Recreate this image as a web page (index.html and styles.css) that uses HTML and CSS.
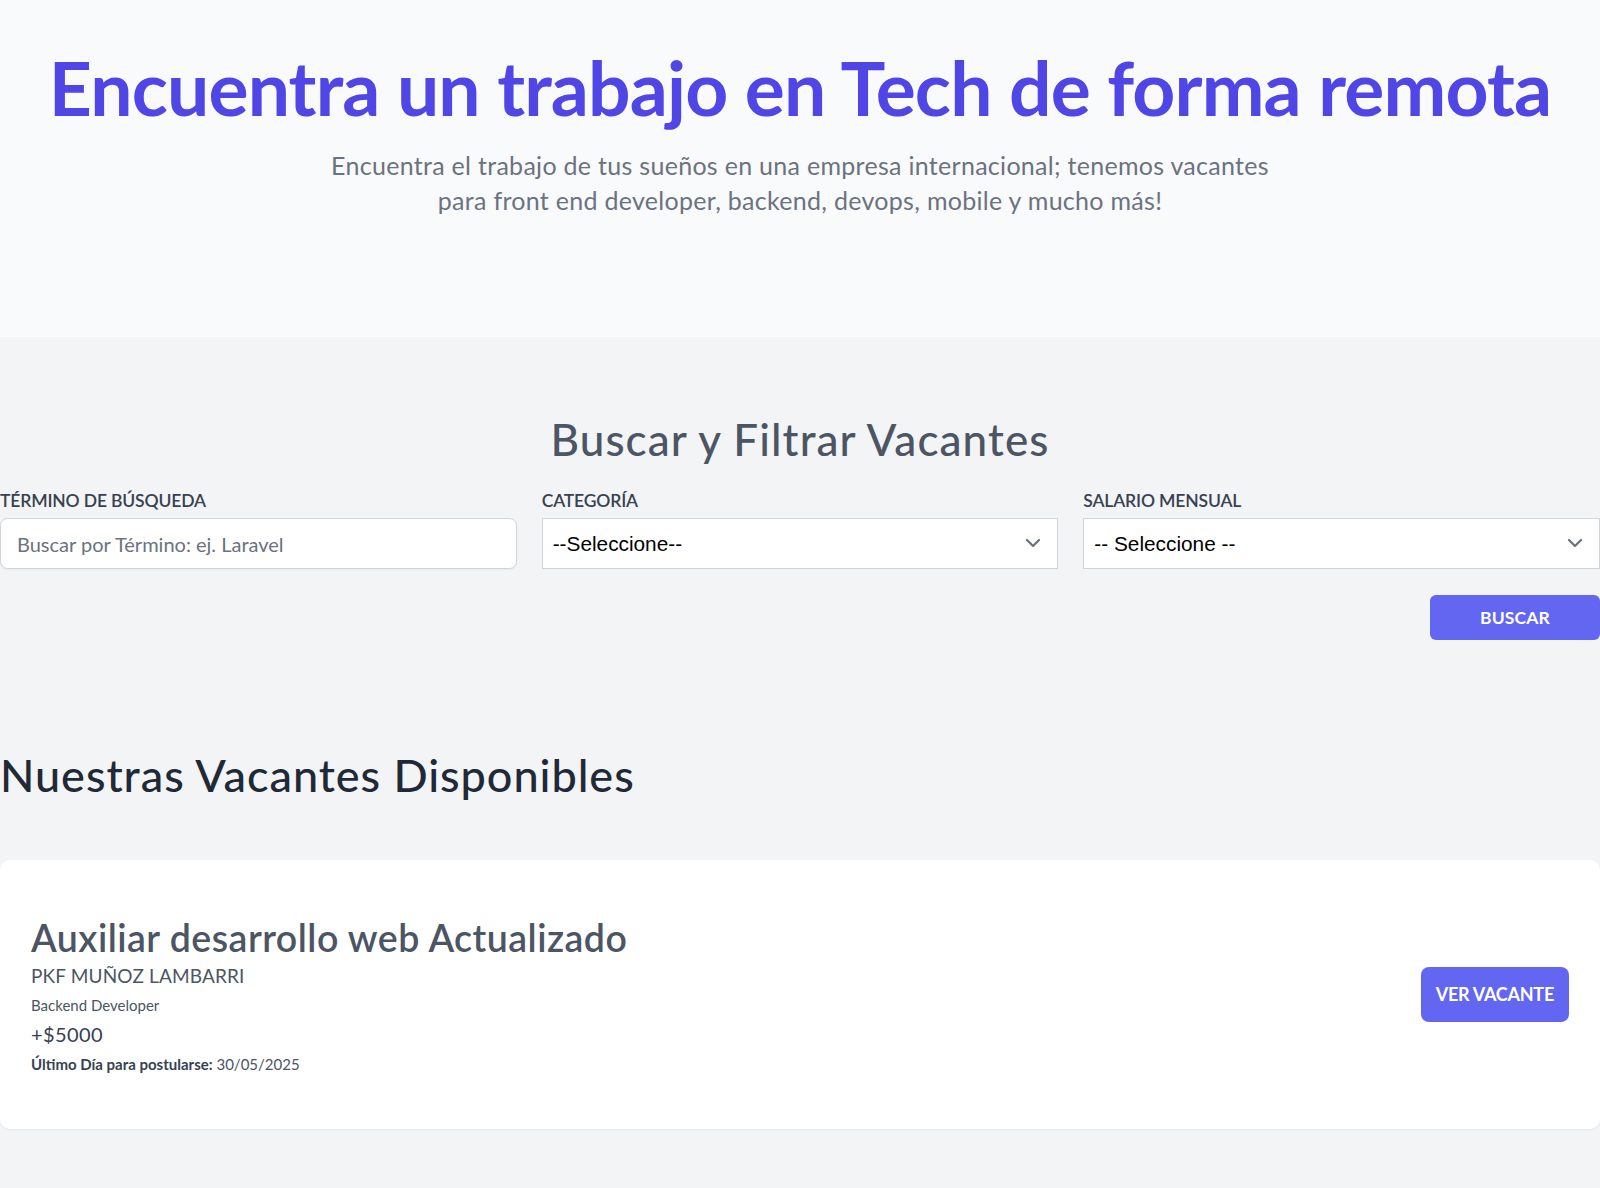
FILE: index.html
```html
<!DOCTYPE html>
<html lang="es">
<head>
<meta charset="utf-8">
<title>DevJobs</title>
<link rel="stylesheet" href="styles.css">
</head>
<body>
<header class="hero">
  <h1 class="hero-title">Encuentra un trabajo en Tech de forma remota</h1>
  <p class="hero-sub">Encuentra el trabajo de tus sueños en una empresa internacional; tenemos vacantes para front end developer, backend, devops, mobile y mucho más!</p>
</header>
<main class="main">
  <section class="search">
    <h2 class="search-title">Buscar y Filtrar Vacantes</h2>
    <form class="filters">
      <div class="field">
        <label class="field-label" for="termino">Término de búsqueda</label>
        <input class="input" id="termino" type="text" placeholder="Buscar por Término: ej. Laravel">
      </div>
      <div class="field">
        <label class="field-label" for="categoria">Categoría</label>
        <div class="select-wrap">
          <select class="select" id="categoria"><option>--Seleccione--</option></select>
          <svg class="chev" viewBox="0 0 20 20" fill="none"><path d="M6 8l4 4 4-4" stroke="#6b7280" stroke-width="1.5" stroke-linecap="round" stroke-linejoin="round"/></svg>
        </div>
      </div>
      <div class="field">
        <label class="field-label" for="salario">Salario mensual</label>
        <div class="select-wrap">
          <select class="select" id="salario"><option>-- Seleccione --</option></select>
          <svg class="chev" viewBox="0 0 20 20" fill="none"><path d="M6 8l4 4 4-4" stroke="#6b7280" stroke-width="1.5" stroke-linecap="round" stroke-linejoin="round"/></svg>
        </div>
      </div>
    </form>
    <div class="actions">
      <button class="btn-buscar" type="button">Buscar</button>
    </div>
  </section>
  <section class="jobs">
    <h3 class="jobs-title">Nuestras Vacantes Disponibles</h3>
    <div class="card">
      <div class="card-info">
        <a class="card-title" href="#">Auxiliar desarrollo web Actualizado</a>
        <p class="card-company">PKF MUÑOZ LAMBARRI</p>
        <p class="card-category">Backend Developer</p>
        <p class="card-salary">+$5000</p>
        <p class="card-date"><strong>Último Día para postularse:</strong> 30/05/2025</p>
      </div>
      <a class="btn-ver" href="#">Ver vacante</a>
    </div>
  </section>
</main>
</body>
</html>
```
FILE: styles.css
```css
body {
  margin: 0;
  font-family: Lato, "Noto Sans", sans-serif;
  background: #f3f4f6;
}
.hero {
  background: #f9fafb;
  padding: 50px 0 119px;
  text-align: center;
}
.hero-title {
  margin: 0;
  font-size: 75px;
  line-height: 75px;
  font-weight: 700;
  letter-spacing: -0.85px;
  color: #4f46e5;
}
.hero-sub {
  margin: 23px auto 0;
  max-width: 960px;
  font-size: 25px;
  line-height: 35px;
  letter-spacing: 0.29px;
  color: #6b7280;
}
.main {
  min-height: 851px;
}
.search {
  padding-top: 76px;
}
.search-title {
  margin: 0;
  text-align: center;
  font-size: 44px;
  line-height: 52px;
  font-weight: 500;
  letter-spacing: 1.1px;
  color: #4b5563;
}
.filters {
  display: grid;
  grid-template-columns: repeat(3, 1fr);
  gap: 25px;
  margin: 23px 0 0;
}
.field-label {
  display: block;
  font-size: 17.5px;
  line-height: 25px;
  font-weight: 600;
  letter-spacing: -0.15px;
  color: #374151;
  text-transform: uppercase;
}
.input {
  display: block;
  box-sizing: border-box;
  width: 100%;
  height: 51px;
  margin-top: 5px;
  padding: 0 16px;
  border: 1px solid #d1d5db;
  border-radius: 7.5px;
  box-shadow: 0 1px 2px rgba(0, 0, 0, 0.05);
  background: #fff;
  font-family: Lato, sans-serif;
  font-size: 20px;
  color: #111827;
}
.input::placeholder {
  color: #6b7280;
}
.select-wrap {
  position: relative;
  margin-top: 5px;
}
.select {
  display: block;
  box-sizing: border-box;
  width: 100%;
  height: 51px;
  padding: 0 40px 0 10px;
  border: 1px solid #d1d5db;
  border-radius: 0;
  background: #fff;
  appearance: none;
  -webkit-appearance: none;
  font-family: "Liberation Sans", Arial, sans-serif;
  font-size: 20.8px;
  color: #000;
}
.chev {
  position: absolute;
  right: 10px;
  top: 10px;
  width: 30px;
  height: 30px;
  pointer-events: none;
}
.actions {
  display: flex;
  justify-content: flex-end;
  margin-top: 26px;
}
.btn-buscar {
  height: 45px;
  padding: 0 50px;
  border: 0;
  border-radius: 6px;
  background: #6366f1;
  color: #fff;
  font-family: Lato, sans-serif;
  font-size: 17.5px;
  font-weight: 700;
  letter-spacing: 0.15px;
  text-transform: uppercase;
}
.jobs-title {
  margin: 108px 0 0;
  font-size: 45px;
  line-height: 54px;
  font-weight: 500;
  letter-spacing: 0.95px;
  color: #1f2937;
}
.card {
  margin-top: 58px;
  padding: 55px 31px;
  display: flex;
  justify-content: space-between;
  align-items: center;
  background: #fff;
  border-radius: 10px;
  box-shadow: 0 1px 2px rgba(0, 0, 0, 0.06);
}
.card-info p {
  margin: 0;
}
.card-title {
  display: block;
  font-size: 37.5px;
  line-height: 45px;
  font-weight: 600;
  letter-spacing: 0.48px;
  color: #4b5563;
  text-decoration: none;
}
.card-info .card-company {
  margin-top: 3px;
  font-size: 19px;
  line-height: 25px;
  letter-spacing: 0.15px;
  color: #4b5563;
}
.card-info .card-category {
  margin-top: 7px;
  font-size: 15px;
  line-height: 20px;
  color: #4b5563;
}
.card-info .card-salary {
  margin-top: 7px;
  font-size: 20px;
  line-height: 25px;
  letter-spacing: 0.4px;
  color: #374151;
}
.card-info .card-date {
  margin-top: 7px;
  font-size: 15px;
  line-height: 20px;
  color: #4b5563;
}
.card-date strong {
  color: #374151;
  font-weight: 700;
}
.btn-ver {
  display: block;
  height: 55px;
  line-height: 55px;
  padding: 0 15px;
  border-radius: 8px;
  background: #6366f1;
  color: #fff;
  font-size: 18px;
  font-weight: 700;
  letter-spacing: -0.26px;
  text-transform: uppercase;
  text-decoration: none;
}
```
